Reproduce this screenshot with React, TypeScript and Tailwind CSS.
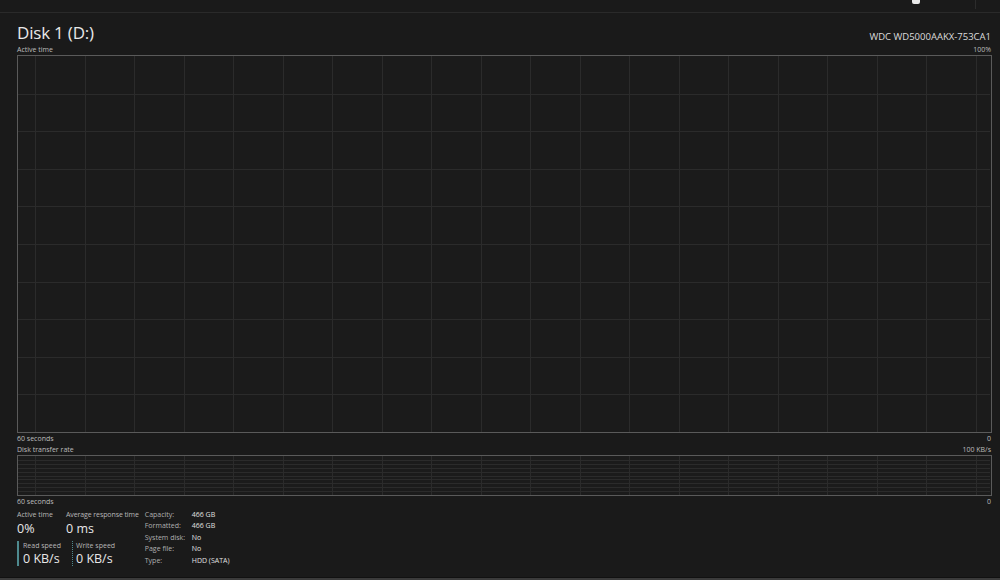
import React from "react"

const FONT = { fontFamily: '"Open Sans", "Noto Sans", sans-serif' }

function Grid({ height, rows }: { height: number; rows: number }) {
  const width = 972
  const xs: number[] = []
  for (let x = 17; x < width; x += 49.5) xs.push(Math.round(x) + 0.5)
  const ys: number[] = []
  for (let i = 1; i < rows; i++) ys.push(Math.round((height / rows) * i) + 0.5)
  return (
    <svg width={width} height={height} className="block">
      {ys.map((y) => (
        <line key={"h" + y} x1={0} x2={width} y1={y} y2={y} stroke="#2b2b2b" strokeWidth={1} />
      ))}
      {xs.map((x) => (
        <line key={"v" + x} x1={x} x2={x} y1={0} y2={height} stroke="#2b2b2b" strokeWidth={1} />
      ))}
    </svg>
  )
}

function AxisRow({ left, right }: { left: string; right: string }) {
  return (
    <div className="flex justify-between h-[11px] items-center text-[7px] text-[#bdbdbd] leading-none">
      <span>{left}</span>
      <span className="pr-[1px]">{right}</span>
    </div>
  )
}

const details: [string, string][] = [
  ["Capacity:", "466 GB"],
  ["Formatted:", "466 GB"],
  ["System disk:", "No"],
  ["Page file:", "No"],
  ["Type:", "HDD (SATA)"],
]

export default function App() {
  return (
    <div className="w-[1000px] h-[580px] bg-[#1a1a1a] flex flex-col overflow-hidden" style={FONT}>
      {/* cut-off toolbar strip */}
      <div className="h-[13px] border-b border-[#2a2a2a] relative shrink-0">
        <div className="absolute left-[912px] top-0 w-[8px] h-[4px] bg-[#e8e8e8] rounded-b-[2px]" />
        <div className="absolute left-[975px] top-0 w-px h-[9px] bg-[#2c2c2c]" />
      </div>

      <div className="pl-[17px] pr-[8px] flex-1 flex flex-col">
        <div className="flex justify-between items-end h-[31px] pb-[3px]">
          <span className="text-[17px] leading-none text-[#e8e8e8] tracking-[-0.2px]">Disk 1 (D:)</span>
          <span className="text-[9.5px] leading-none text-[#dcdcdc] pr-[1px]">WDC WD5000AAKX-753CA1</span>
        </div>

        <AxisRow left="Active time" right="100%" />
        <div className="border border-[#5a5a5a] h-[378px] w-[975px] bg-[#1b1b1b]">
          <Grid height={376} rows={10} />
        </div>
        <AxisRow left="60 seconds" right="0" />

        <AxisRow left="Disk transfer rate" right="100 KB/s" />
        <div className="border border-[#5a5a5a] h-[41px] w-[975px] bg-[#1b1b1b]">
          <Grid height={39} rows={10} />
        </div>
        <AxisRow left="60 seconds" right="0" />

        <div className="flex mt-[3px] gap-[6px]">
          <div className="flex flex-col">
            <div className="flex gap-[10px]">
              <div className="flex flex-col w-[39px]">
                <span className="text-[7px] text-[#b8b8b8] leading-[10px]">Active time</span>
                <span className="text-[12.5px] text-[#e8e8e8] leading-[18px]">0%</span>
              </div>
              <div className="flex flex-col">
                <span className="text-[7px] text-[#b8b8b8] leading-[10px] tracking-[-0.1px]">Average response time</span>
                <span className="text-[12.5px] text-[#e8e8e8] leading-[18px]">0 ms</span>
              </div>
            </div>
            <div className="flex mt-[3px] gap-[7px]">
              <div className="flex flex-col border-l-2 border-[#4e8a8f] pl-[4px] w-[48px]">
                <span className="text-[7px] text-[#b8b8b8] leading-[10px]">Read speed</span>
                <span className="text-[12.5px] text-[#e8e8e8] leading-[15px]">0 KB/s</span>
              </div>
              <div className="flex flex-col border-l border-dotted border-[#4e8a8f] pl-[3px]">
                <span className="text-[7px] text-[#b8b8b8] leading-[10px]">Write speed</span>
                <span className="text-[12.5px] text-[#e8e8e8] leading-[15px]">0 KB/s</span>
              </div>
            </div>
          </div>
          <div className="grid grid-cols-[47px_auto] text-[7px] leading-[11px] -mt-[1px]">
            {details.map(([k, v]) => (
              <React.Fragment key={k}>
                <span className="text-[#b0b0b0]">{k}</span>
                <span className="text-[#e0e0e0]">{v}</span>
              </React.Fragment>
            ))}
          </div>
        </div>
      </div>

      <div className="h-[3px] bg-[#3b3b3b] border-t border-[#111] shrink-0" />
    </div>
  )
}
